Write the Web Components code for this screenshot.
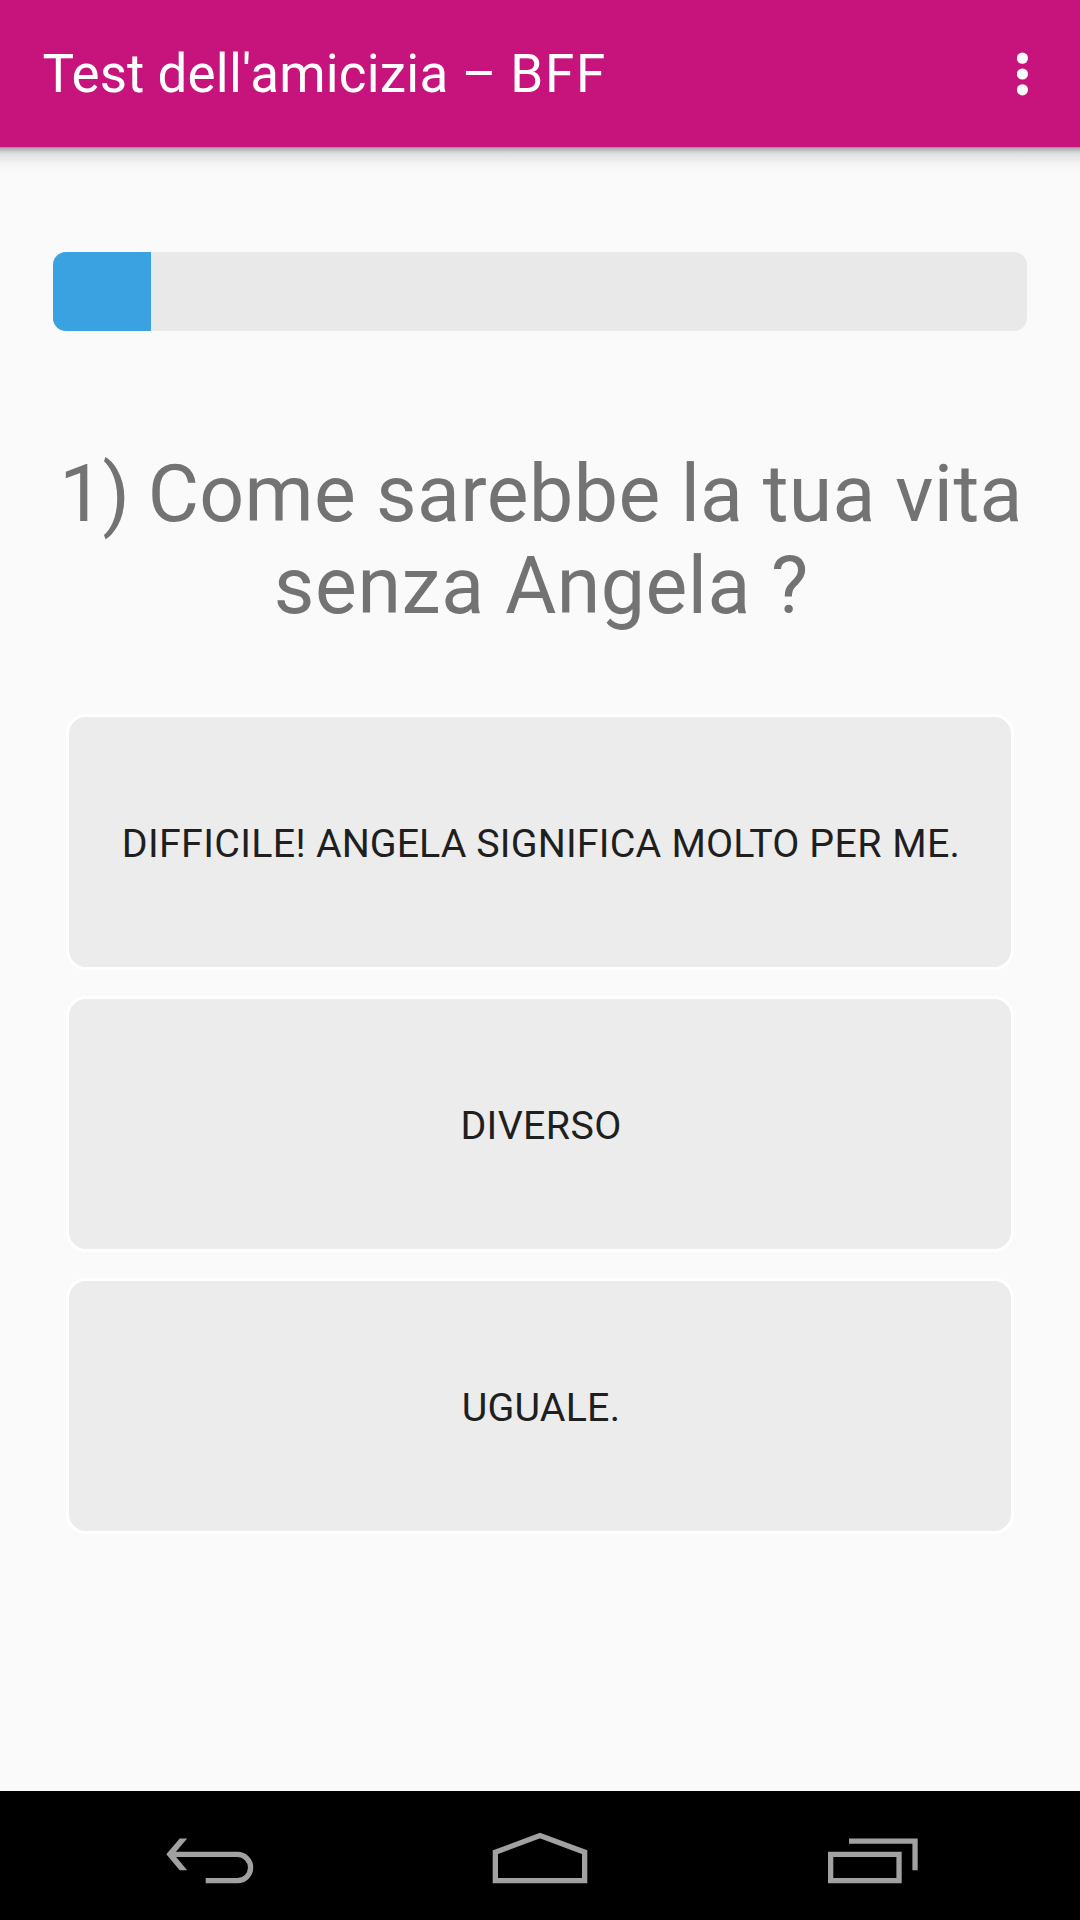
<!DOCTYPE html>
<html lang="it">
<head>
<meta charset="utf-8">
<title>Test dell'amicizia – BFF</title>
<style>
  html, body { margin: 0; height: 1920px; overflow: hidden; }
  body { font-family: Roboto, "Noto Sans", sans-serif; background: #fafafa; }
</style>
</head>
<body>
<quiz-screen></quiz-screen>
<script>
function define(name, html) {
  const template = document.createElement('template');
  template.innerHTML = html;
  customElements.define(name, class extends HTMLElement {
    constructor() {
      super();
      this.attachShadow({ mode: 'open' }).appendChild(template.content.cloneNode(true));
    }
  });
}

define('app-bar', `
  <style>
    :host { display: flex; align-items: center; justify-content: space-between; box-sizing: border-box;
      height: 147px; padding: 0 51px 0 42.500px; background: #c7137c; color: #fff; position: relative;
      font-size: 52.900px; line-height: 62px; white-space: nowrap; }
    /* soft drop shadow below the bar */
    .shade { position: absolute; left: 0; right: 0; top: 147px; height: 27px;
      background: linear-gradient(#888 0, #aaa 1px, #bdbdbd 3px, #dcdcdc 6px, #e7e7e7 10px, #f2f2f2 16px, #f8f8f8 22px, #fafafa); }
    svg { display: block; }
  </style>
  <slot></slot>
  <svg width="12" height="44" viewBox="0 0 12 44" fill="#fff">
    <circle cx="5.4" cy="6.2" r="5.6"/><circle cx="5.4" cy="22" r="5.6"/><circle cx="5.4" cy="37.8" r="5.6"/>
  </svg>
  <div class="shade"></div>`);

define('quiz-progress', `
  <style>
    :host { display: flex; height: 79px; margin: 105px 53px 0; border-radius: 13px; overflow: hidden; background: #e9e9e9; }
    div { width: 98px; background: #3aa2e1; }
  </style>
  <div></div>`);

define('quiz-question', `
  <style>
    :host { display: flex; flex-direction: column; align-items: center; margin-top: 117px; padding-left: 2px;
      color: #737373; font-size: 78.8px; line-height: 92px; white-space: nowrap; }
  </style>
  <slot></slot>`);

define('quiz-answer', `
  <style>
    :host { display: flex; align-items: center; justify-content: center; box-sizing: border-box;
      height: 256px; border: 3px solid #fff; border-radius: 20px; background: #ececec; padding: 4px 0 0 2px;
      color: #1f1f1f; font-size: 39.4px; line-height: 46px; white-space: nowrap; }
  </style>
  <slot></slot>`);

define('nav-bar', `
  <style>
    :host { display: flex; gap: 190px; box-sizing: border-box; height: 129px; padding-left: 140px; background: #000; }
    svg { display: block; fill: none; stroke: #a1a1a1; stroke-width: 5.3; }
  </style>
  <svg width="140" height="129" viewBox="140 1791 140 129">
    <path d="M171 1854.4H237.500A13.150 13.150 0 0 1 237.500 1880.700H205.700"/>
    <path d="M179.700 1838.500H187.200L173.800 1854.300L187.200 1870.200H179.700L166.300 1854.300Z" fill="#a1a1a1" stroke="none"/>
  </svg>
  <svg width="140" height="129" viewBox="470 1791 140 129">
    <path d="M495.350 1852.200L540 1835.600L584.650 1852.200V1880.700H495.350Z"/>
  </svg>
  <svg width="140" height="129" viewBox="800 1791 140 129">
    <path d="M830.650 1854.400H899.050V1880.700H830.650ZM849 1841.200H915.050V1870.300"/>
  </svg>`);

define('quiz-screen', `
  <style>
    :host { display: flex; flex-direction: column; width: 1080px; height: 1920px; background: #fafafa; }
    main { flex: 1; }
    .answers { display: flex; flex-direction: column; gap: 26px; margin: 82px 66px 0; }
    /* tracking tuned word by word */
    i { font-style: normal; letter-spacing: var(--t, 0); }
  </style>
  <app-bar><span><i style="--t:.05px">Test </i><i style="--t:.22px">dell'amicizia </i><i style="--t:.4px">– </i><i style="--t:1.7px">BFF</i></span></app-bar>
  <main>
    <quiz-progress></quiz-progress>
    <quiz-question><span><i style="--t:-.9px">1) </i><i style="--t:.3px">Come </i><i style="--t:.45px">sarebbe </i><i style="--t:.2px">la </i><i style="--t:.2px">tua </i><i style="--t:.4px">vita</i></span><span><i style="--t:.6px">senza </i><i style="--t:.5px">Angela </i><i>?</i></span></quiz-question>
    <div class="answers">
      <quiz-answer><span><i style="--t:.33px">DIFFICILE! </i><i>ANGELA </i><i style="--t:.2px">SIGNIFICA </i><i style="--t:.1px">MOLTO </i><i style="--t:.4px">PER </i><i style="--t:.3px">ME.</i></span></quiz-answer>
      <quiz-answer><span><i style="--t:.35px">DIVERSO</i></span></quiz-answer>
      <quiz-answer><span><i style="--t:.2px">UGUALE.</i></span></quiz-answer>
    </div>
  </main>
  <nav-bar></nav-bar>`);
</script>
</body>
</html>
